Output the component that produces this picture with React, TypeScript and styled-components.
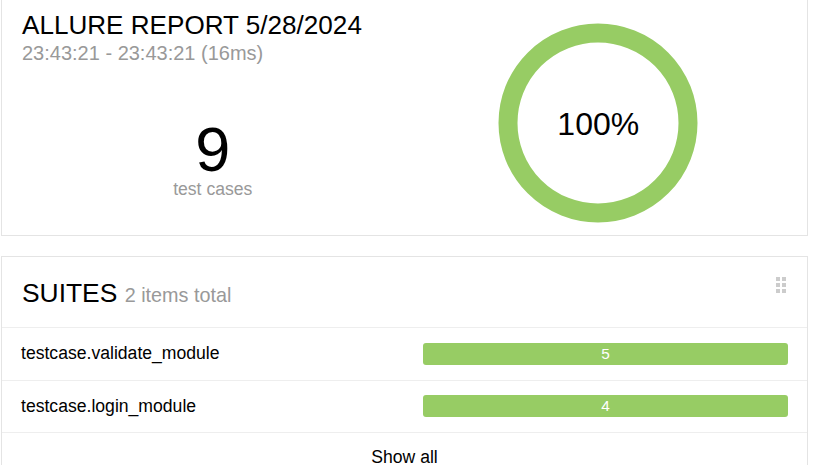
import React from "react";
import styled, { createGlobalStyle } from "styled-components";

const GlobalStyle = createGlobalStyle`
  html, body {
    margin: 0;
    padding: 0;
    background: #fff;
    font-family: "Liberation Sans", Arial, sans-serif;
    color: #000;
    overflow: hidden;
  }
  *, *::before, *::after { box-sizing: border-box; }
`;

const Page = styled.div`
  display: flex;
  flex-direction: column;
  gap: 20px;
  padding-left: 1px;
  margin-top: -1px;
`;

const Card = styled.section`
  width: 807px;
  border: 1px solid #e4e4e4;
  background: #fff;
`;

const SummaryCard = styled(Card)`
  height: 237px;
  display: grid;
  grid-template-columns: 1fr 1fr;
  padding: 0 16px 0 18px;
`;

const LeftColumn = styled.div`
  display: flex;
  flex-direction: column;
  padding-top: 10px;
`;

const Title = styled.h1`
  margin: 0 0 0 2px;
  font-size: 26.1px;
  font-weight: normal;
  line-height: 30px;
  color: #000;
  white-space: nowrap;
`;

const Subtitle = styled.div`
  margin: 2px 0 0 2px;
  font-size: 20px;
  line-height: 22px;
  color: #999;
  white-space: nowrap;
`;

const Counter = styled.div`
  display: flex;
  flex-direction: column;
  align-items: center;
  margin-top: 55px;
`;

const BigNumber = styled.div`
  font-size: 63px;
  line-height: 61px;
`;

const CounterLabel = styled.div`
  font-size: 17.6px;
  line-height: 18px;
  color: #999;
`;

const DonutBox = styled.div`
  position: relative;
  width: 200px;
  height: 200px;
  justify-self: center;
  margin-top: 23px;
`;

const DonutLabel = styled.div`
  position: absolute;
  inset: 0;
  display: flex;
  align-items: center;
  justify-content: center;
  padding-top: 3px;
  font-size: 32px;
`;

const WidgetHeader = styled.div`
  display: flex;
  justify-content: space-between;
  align-items: flex-start;
  padding: 21px 20px 0 20px;
  height: 71px;
  border-bottom: 1px solid #eee;
`;

const WidgetTitle = styled.h2`
  margin: 0;
  font-size: 26.4px;
  font-weight: normal;
  line-height: 30px;
`;

const Count = styled.span`
  font-size: 19.8px;
  color: #999;
`;

const DragHandle = styled.div`
  display: grid;
  grid-template-columns: repeat(2, 4px);
  grid-auto-rows: 4px;
  gap: 2px;
  margin-top: -1px;
  margin-right: 1px;
`;

const Dot = styled.span`
  background: #ccc;
`;

const Row = styled.div`
  display: flex;
  align-items: center;
  height: 52.5px;
  padding: 0 19px 0 19px;
  border-bottom: 1px solid #eee;
  font-size: 17.6px;
`;

const RowName = styled.div`
  flex: 1;
`;

const Bar = styled.div`
  width: 365px;
  height: 22px;
  border-radius: 3px;
  background: #97cc64;
  color: #fff;
  font-size: 15.4px;
  display: flex;
  align-items: center;
  justify-content: center;
`;

const ShowAll = styled.div`
  text-align: center;
  font-size: 17.6px;
  line-height: 20px;
  padding-top: 14px;
  height: 40px;
`;

const suites = [
  { name: "testcase.validate_module", count: 5 },
  { name: "testcase.login_module", count: 4 },
];

export default function App() {
  return (
    <>
      <GlobalStyle />
      <Page>
        <SummaryCard>
          <LeftColumn>
            <Title>ALLURE REPORT 5/28/2024</Title>
            <Subtitle>23:43:21 - 23:43:21 (16ms)</Subtitle>
            <Counter>
              <BigNumber>9</BigNumber>
              <CounterLabel>test cases</CounterLabel>
            </Counter>
          </LeftColumn>
          <DonutBox>
            <svg width="200" height="200" viewBox="0 0 200 200">
              <circle cx="100" cy="100" r="90" fill="none" stroke="#97cc64" strokeWidth="19" />
            </svg>
            <DonutLabel>100%</DonutLabel>
          </DonutBox>
        </SummaryCard>
        <Card>
          <WidgetHeader>
            <WidgetTitle>
              SUITES <Count>2 items total</Count>
            </WidgetTitle>
            <DragHandle>
              {Array.from({ length: 6 }).map((_, i) => (
                <Dot key={i} />
              ))}
            </DragHandle>
          </WidgetHeader>
          {suites.map((s) => (
            <Row key={s.name}>
              <RowName>{s.name}</RowName>
              <Bar>{s.count}</Bar>
            </Row>
          ))}
          <ShowAll>Show all</ShowAll>
        </Card>
      </Page>
    </>
  );
}
